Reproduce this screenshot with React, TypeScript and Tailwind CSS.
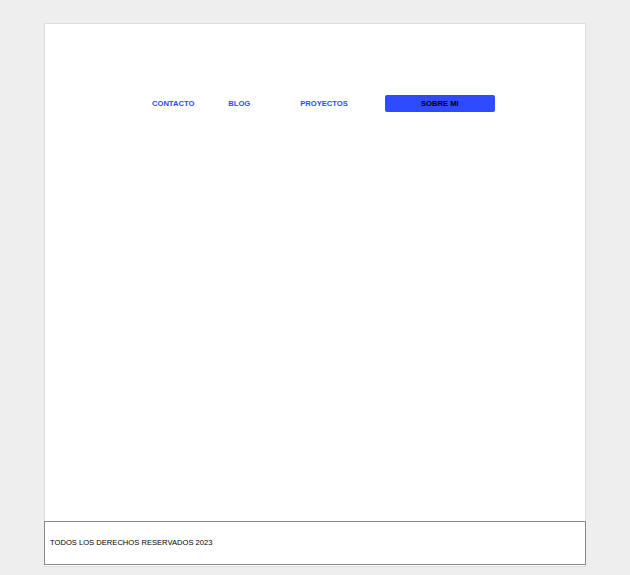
import React from 'react';

const navLinks = [
  { label: 'CONTACTO', offset: 'ml-[107px]' },
  { label: 'BLOG', offset: 'ml-[34px]' },
  { label: 'PROYECTOS', offset: 'ml-[50px]' },
];

const App: React.FC = () => {
  return (
    <div className="min-h-[575px] bg-[#eeeeee] px-[44px] pt-[23px] font-['Liberation_Sans',Arial,sans-serif]">
      <div className="h-[544px] border border-[#dddddd] bg-white flex flex-col pb-px">
        <nav className="mt-[71px] flex items-center h-[17px]">
          {navLinks.map(link => (
            <a key={link.label} href="#" className={`${link.offset} pt-px text-[7.6px] font-bold text-[#2e4bff] leading-none`}>
              {link.label}
            </a>
          ))}
          <button className="ml-[37px] w-[110px] h-[17px] pt-px rounded-[2px] bg-[#2e4bff] text-[7.6px] font-bold text-black leading-none">
            SOBRE MI
          </button>
        </nav>

        <footer className="mt-auto -mx-px h-[44px] border border-[#8a8a8a] flex items-center pl-[5px]">
          <p className="text-[7.6px] text-black leading-none">TODOS LOS DERECHOS RESERVADOS 2023</p>
        </footer>
      </div>
    </div>
  );
};

export default App;
